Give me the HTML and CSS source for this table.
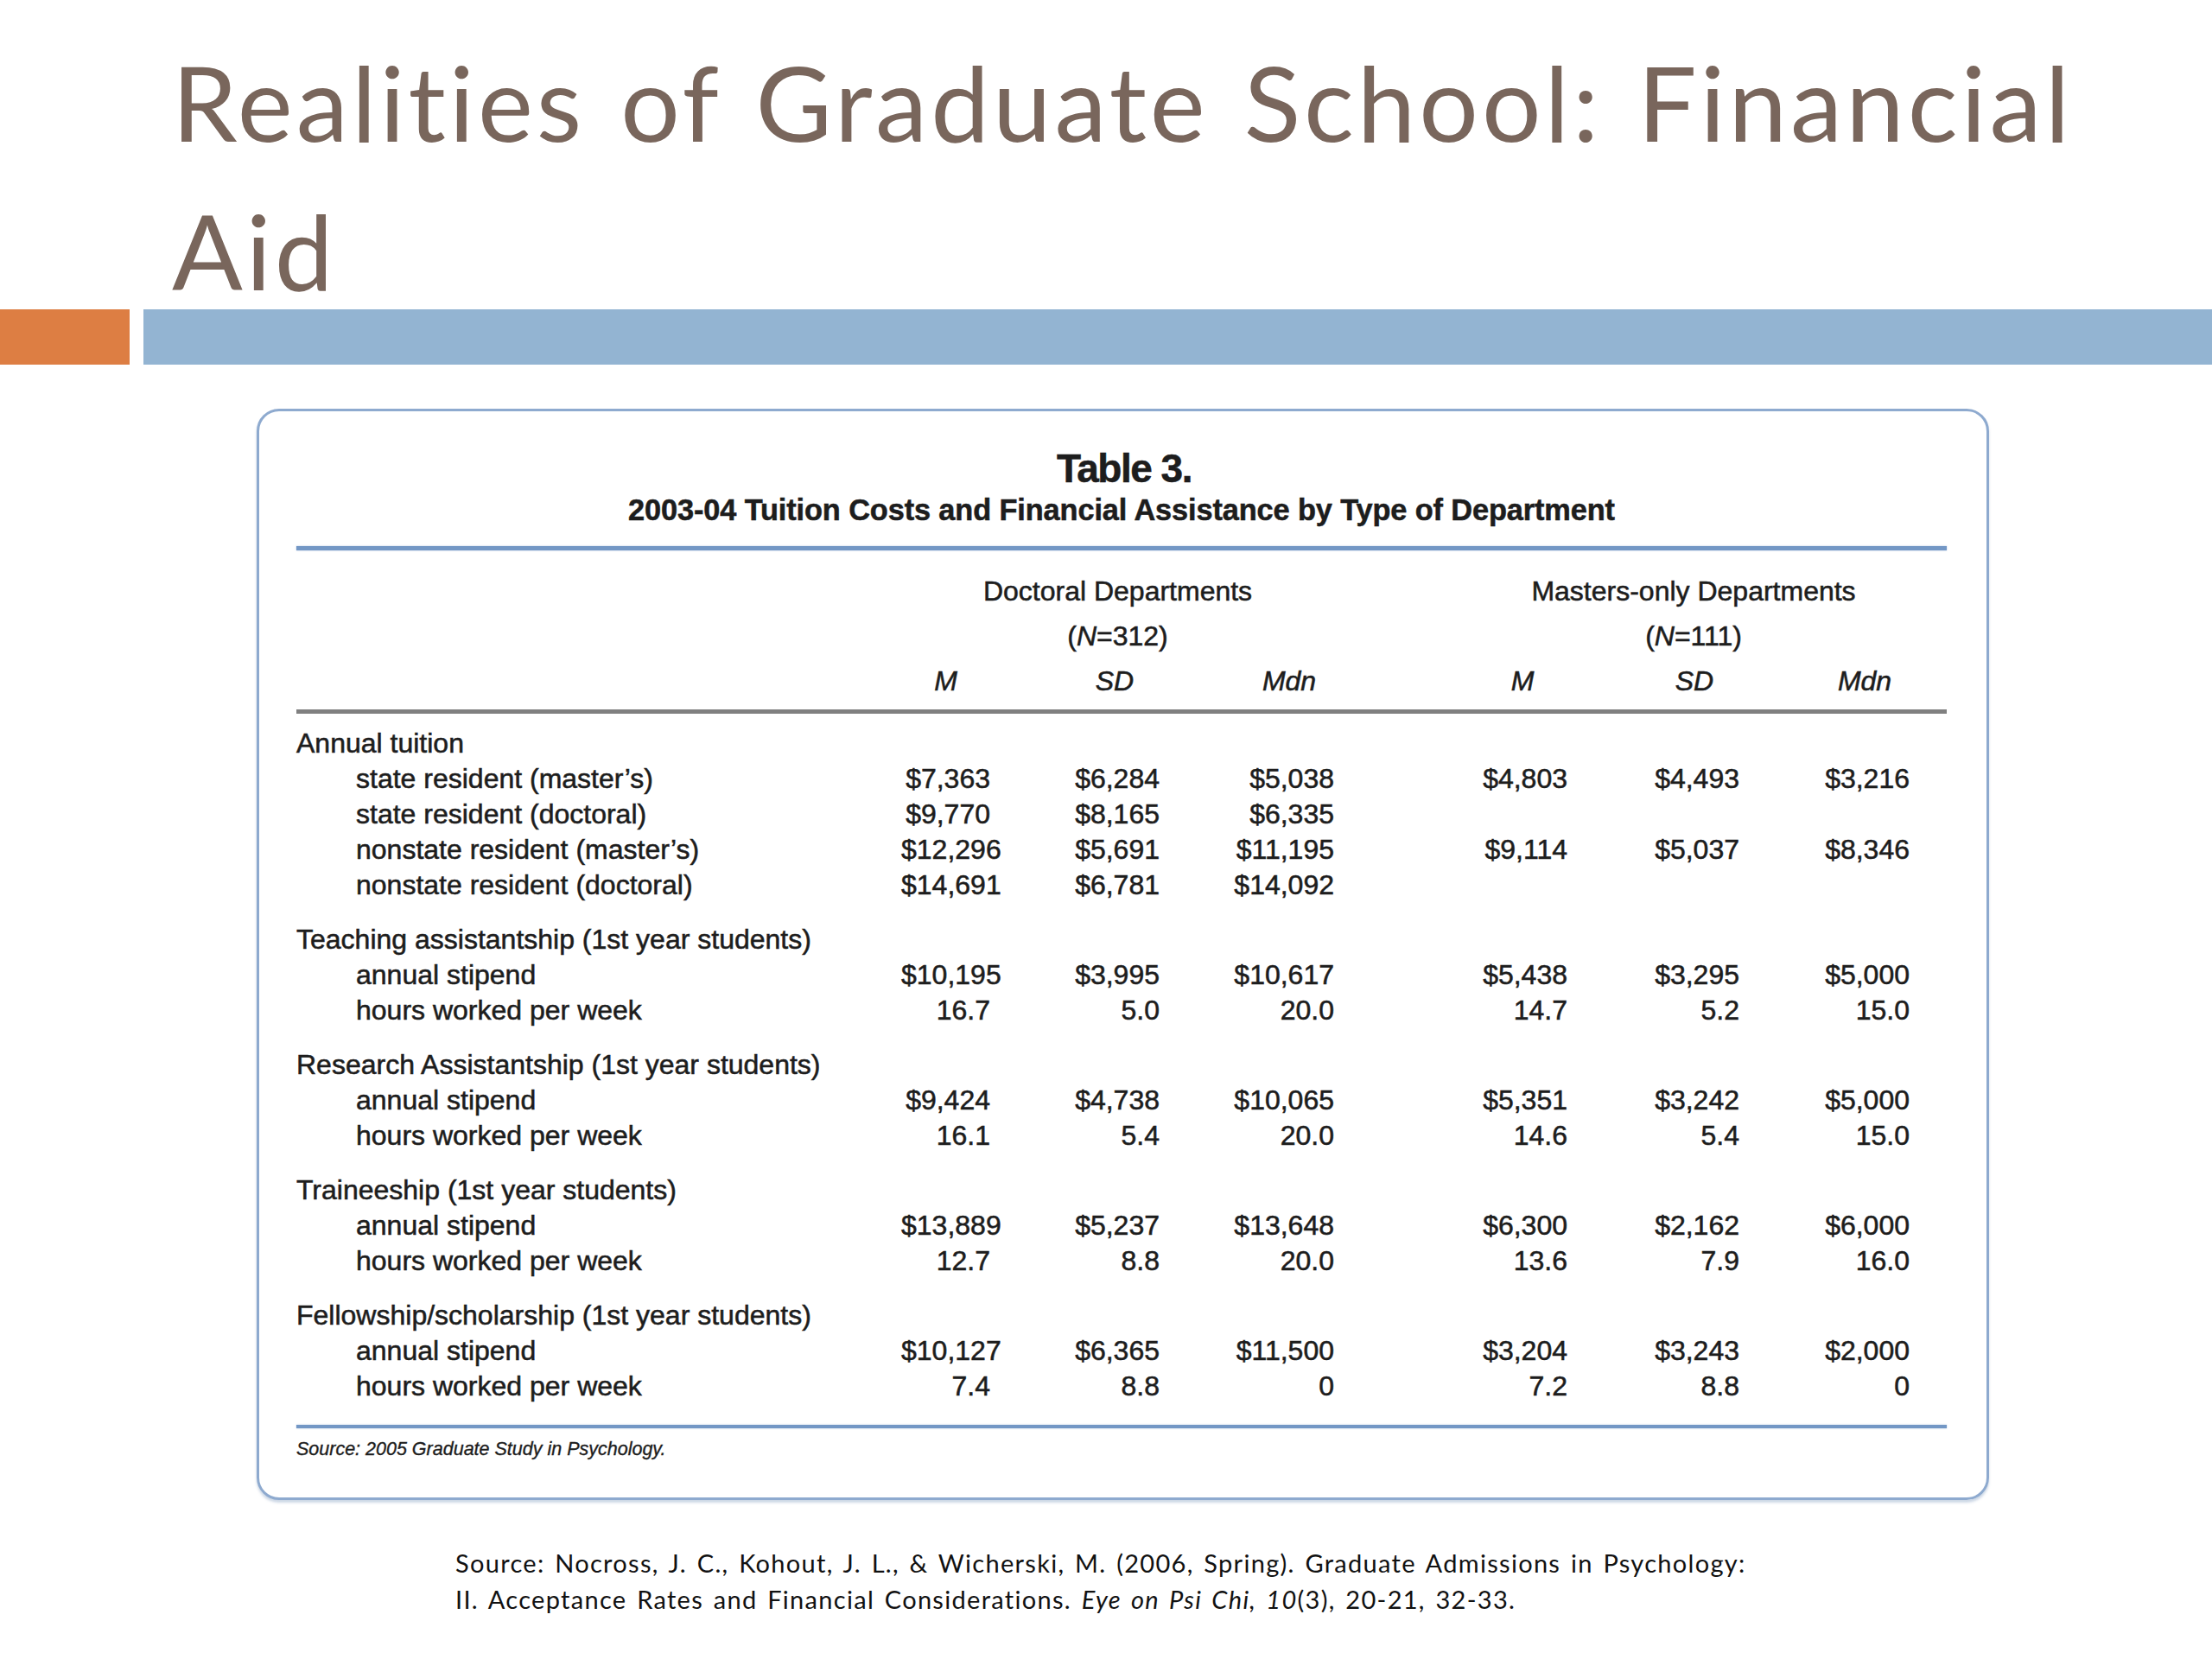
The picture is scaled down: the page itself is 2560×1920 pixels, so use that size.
FILE: index.html
```html
<!DOCTYPE html>
<html lang="en">
<head>
<meta charset="utf-8">
<title>Realities of Graduate School: Financial Aid</title>
<link rel="stylesheet" href="styles.css">
</head>
<body>
<header class="slide-head">
  <h1 class="slide-title">Realities of Graduate School: Financial Aid</h1>
</header>
<div class="bars">
  <div class="bar-accent"></div>
  <div class="bar-main"></div>
</div>
<section class="table-card">
  <div class="tbl-title">Table 3.</div>
  <div class="tbl-subtitle">2003-04 Tuition Costs and Financial Assistance by Type of Department</div>
  <div class="rule-blue rule-top"></div>
  <div class="row head">
    <span class="span-doc">Doctoral Departments</span>
    <span class="span-mas">Masters-only Departments</span>
  </div>
  <div class="row head">
    <span class="span-doc">(<i>N</i>=312)</span>
    <span class="span-mas">(<i>N</i>=111)</span>
  </div>
  <div class="row head stat">
    <span class="c1"><i>M</i></span><span class="c2"><i>SD</i></span><span class="c3"><i>Mdn</i></span>
    <span class="c4"><i>M</i></span><span class="c5"><i>SD</i></span><span class="c6"><i>Mdn</i></span>
  </div>
  <div class="rule-grey"></div>

  <div class="row"><span class="lbl">Annual tuition</span></div>
  <div class="row"><span class="lbl sub">state resident (master’s)</span><span class="c1">$7,363</span><span class="c2">$6,284</span><span class="c3">$5,038</span><span class="c4">$4,803</span><span class="c5">$4,493</span><span class="c6">$3,216</span></div>
  <div class="row"><span class="lbl sub">state resident (doctoral)</span><span class="c1">$9,770</span><span class="c2">$8,165</span><span class="c3">$6,335</span></div>
  <div class="row"><span class="lbl sub">nonstate resident (master’s)</span><span class="c1">$12,296</span><span class="c2">$5,691</span><span class="c3">$11,195</span><span class="c4">$9,114</span><span class="c5">$5,037</span><span class="c6">$8,346</span></div>
  <div class="row"><span class="lbl sub">nonstate resident (doctoral)</span><span class="c1">$14,691</span><span class="c2">$6,781</span><span class="c3">$14,092</span></div>

  <div class="row grp"><span class="lbl">Teaching assistantship (1st year students)</span></div>
  <div class="row"><span class="lbl sub">annual stipend</span><span class="c1">$10,195</span><span class="c2">$3,995</span><span class="c3">$10,617</span><span class="c4">$5,438</span><span class="c5">$3,295</span><span class="c6">$5,000</span></div>
  <div class="row"><span class="lbl sub">hours worked per week</span><span class="c1">16.7</span><span class="c2">5.0</span><span class="c3">20.0</span><span class="c4">14.7</span><span class="c5">5.2</span><span class="c6">15.0</span></div>

  <div class="row grp"><span class="lbl">Research Assistantship (1st year students)</span></div>
  <div class="row"><span class="lbl sub">annual stipend</span><span class="c1">$9,424</span><span class="c2">$4,738</span><span class="c3">$10,065</span><span class="c4">$5,351</span><span class="c5">$3,242</span><span class="c6">$5,000</span></div>
  <div class="row"><span class="lbl sub">hours worked per week</span><span class="c1">16.1</span><span class="c2">5.4</span><span class="c3">20.0</span><span class="c4">14.6</span><span class="c5">5.4</span><span class="c6">15.0</span></div>

  <div class="row grp"><span class="lbl">Traineeship (1st year students)</span></div>
  <div class="row"><span class="lbl sub">annual stipend</span><span class="c1">$13,889</span><span class="c2">$5,237</span><span class="c3">$13,648</span><span class="c4">$6,300</span><span class="c5">$2,162</span><span class="c6">$6,000</span></div>
  <div class="row"><span class="lbl sub">hours worked per week</span><span class="c1">12.7</span><span class="c2">8.8</span><span class="c3">20.0</span><span class="c4">13.6</span><span class="c5">7.9</span><span class="c6">16.0</span></div>

  <div class="row grp"><span class="lbl">Fellowship/scholarship (1st year students)</span></div>
  <div class="row"><span class="lbl sub">annual stipend</span><span class="c1">$10,127</span><span class="c2">$6,365</span><span class="c3">$11,500</span><span class="c4">$3,204</span><span class="c5">$3,243</span><span class="c6">$2,000</span></div>
  <div class="row"><span class="lbl sub">hours worked per week</span><span class="c1">7.4</span><span class="c2">8.8</span><span class="c3">0</span><span class="c4">7.2</span><span class="c5">8.8</span><span class="c6">0</span></div>

  <div class="rule-blue rule-bottom"></div>
  <div class="tbl-source">Source: 2005 Graduate Study in Psychology.</div>
</section>
<p class="citation">Source: Nocross, J. C., Kohout, J. L., &amp; Wicherski, M. (2006, Spring). Graduate Admissions in Psychology:<br>II. Acceptance Rates and Financial Considerations. <i>Eye on Psi Chi, 10</i>(3), 20-21, 32-33.</p>
</body>
</html>
```
FILE: styles.css
```css
* { box-sizing: border-box; }
html, body { margin: 0; padding: 0; background: #ffffff; }
body { width: 2560px; height: 1920px; overflow: hidden; }

.slide-head {
  height: 358px;
  padding: 32px 0 0 199px;
}
.slide-title {
  margin: 0;
  width: 2280px;
  font-family: "Lato", "Open Sans", sans-serif;
  font-weight: 400;
  font-size: 121px;
  line-height: 172px;
  letter-spacing: 4px;
  word-spacing: 6px;
  color: #79665c;
}

.bars {
  display: flex;
  gap: 16px;
  height: 64px;
}
.bar-accent { width: 150px; background: #dd7e43; }
.bar-main { flex: 1; background: #93b4d2; }

.table-card {
  margin: 51px 0 0 297px;
  width: 2005px;
  border: 3px solid #8eaacf;
  border-radius: 26px;
  box-shadow: 0 3px 3px rgba(110, 140, 180, 0.35);
  padding: 40px 46px 42px 43px;
  font-family: "Liberation Sans", Arial, sans-serif;
  color: #1d1d1d;
  -webkit-text-stroke: 0.55px #1d1d1d;
}

.tbl-title {
  text-align: center;
  font-weight: 700;
  font-size: 46px;
  line-height: 52px;
  letter-spacing: -1.5px;
  padding-left: 6px;
}
.tbl-subtitle {
  text-align: center;
  font-weight: 700;
  font-size: 34.3px;
  line-height: 44px;
  letter-spacing: -0.1px;
}
.rule-blue {
  height: 5px;
  background: #7397c5;
  box-shadow: 0 0 2px rgba(115, 151, 197, 0.6);
}
.rule-top { margin-top: 20px; margin-bottom: 21px; }
.rule-bottom { margin-top: 24px; height: 4px; }
.rule-grey {
  height: 5px;
  background: #808080;
  margin-top: 7px;
  margin-bottom: 14px;
}

.row {
  display: grid;
  grid-template-columns: 700px 103px 196px 202px 166px 104px 199px 197px 43px;
  font-size: 32px;
  line-height: 41px;
  white-space: nowrap;
}
.row.head { line-height: 52px; text-align: center; }
.row.grp { margin-top: 22px; }

.lbl { grid-column: 1; }
.lbl.sub { padding-left: 69px; }
.c1, .c2, .c3, .c4, .c5, .c6 { text-align: right; }
.c1 { grid-column: 2; }
.c2 { grid-column: 3; }
.c3 { grid-column: 4; }
.c4 { grid-column: 6; }
.c5 { grid-column: 7; }
.c6 { grid-column: 8; }
.span-doc { grid-column: 2 / 5; text-align: center; }
.span-mas { grid-column: 6 / 9; text-align: center; }
.row.stat span { display: flex; justify-content: flex-end; }
.row.stat i { display: block; width: 104px; text-align: center; }

.tbl-source {
  margin-top: 10px;
  font-size: 21.5px;
  line-height: 28px;
  font-style: italic;
  -webkit-text-stroke: 0.35px #1d1d1d;
}

.citation {
  margin: 52px 0 0 527px;
  font-family: "Lato", "Open Sans", sans-serif;
  font-size: 29px;
  line-height: 42px;
  letter-spacing: 1.3px;
  word-spacing: 3px;
  color: #111111;
  white-space: nowrap;
}
```
